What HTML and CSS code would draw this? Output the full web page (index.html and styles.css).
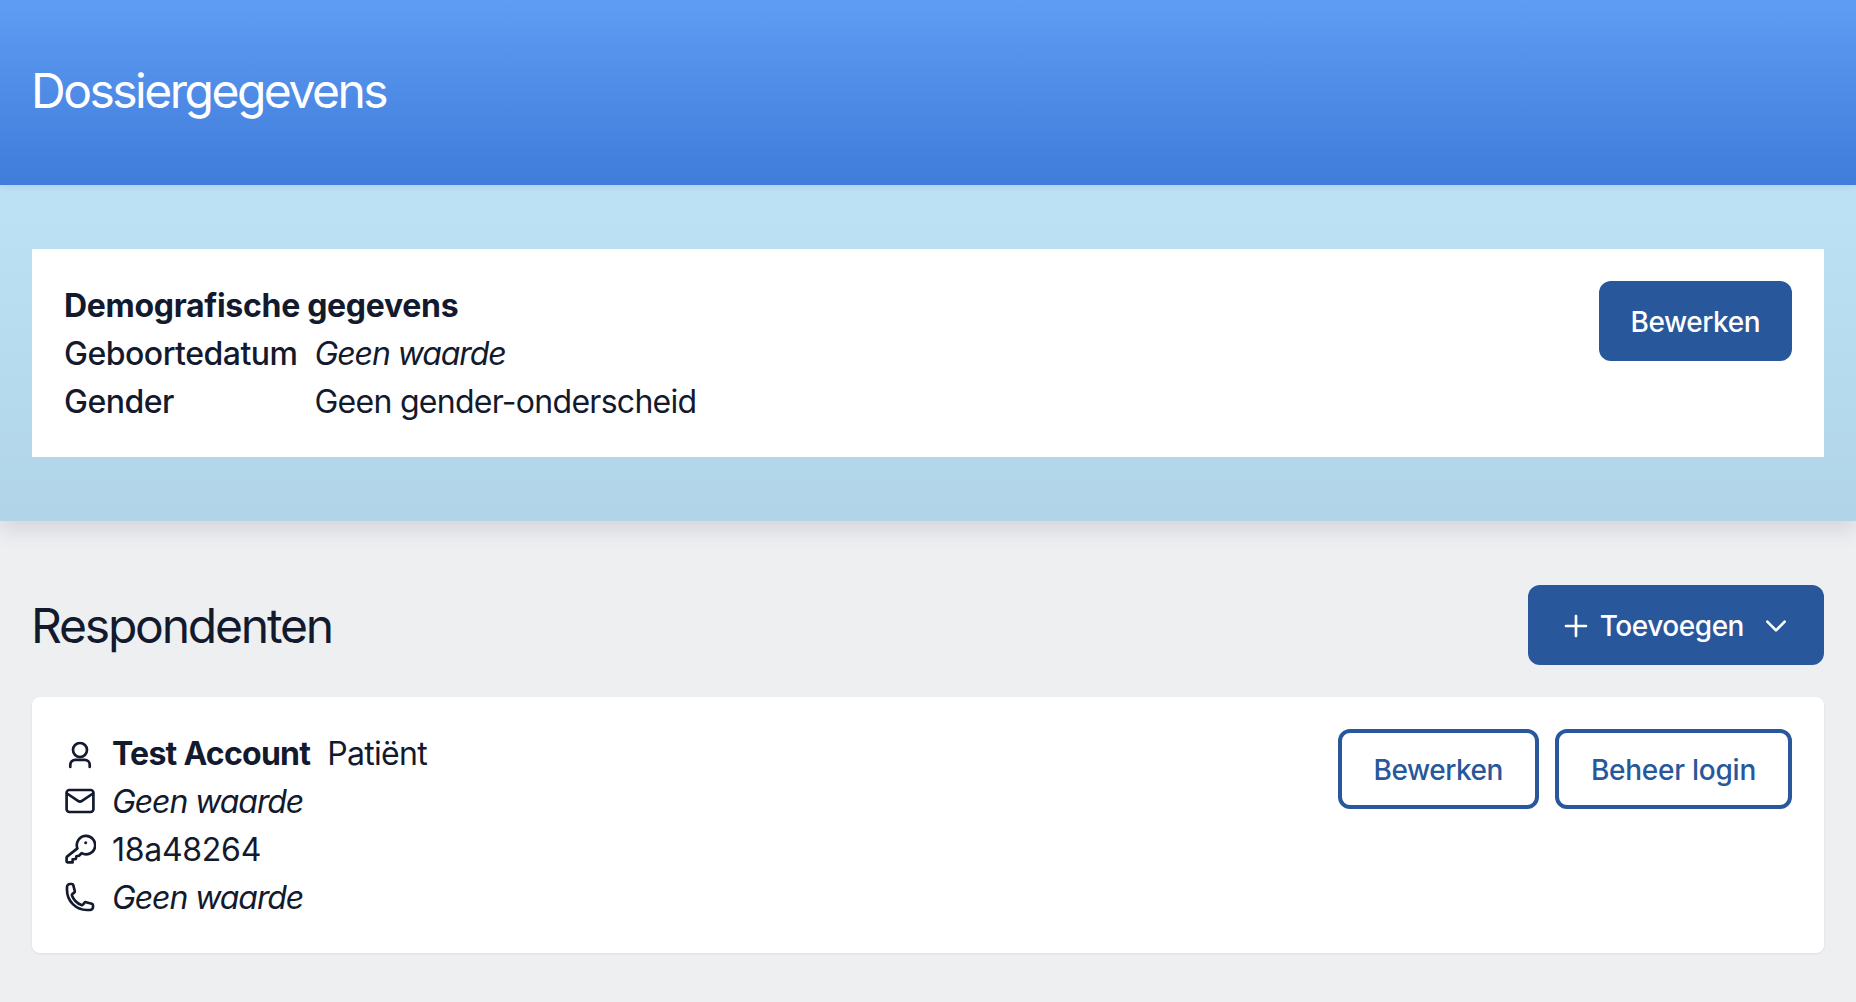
FILE: index.html
```html
<!DOCTYPE html>
<html lang="nl">
<head>
<meta charset="utf-8">
<title>Dossiergegevens</title>
<link rel="stylesheet" href="styles.css">
</head>
<body>
<header class="page-header">
  <h1 class="page-title">Dossiergegevens</h1>
</header>
<section class="band">
  <div class="demo-card">
    <div class="demo-info">
      <h2 class="demo-title">Demografische gegevens</h2>
      <dl class="demo-grid">
        <dt class="demo-label">Geboortedatum</dt>
        <dd class="demo-value empty">Geen waarde</dd>
        <dt class="demo-label">Gender</dt>
        <dd class="demo-value">Geen gender-onderscheid</dd>
      </dl>
    </div>
    <button class="btn btn-solid" type="button">Bewerken</button>
  </div>
</section>
<main class="content">
  <div class="section-head">
    <h2 class="section-title">Respondenten</h2>
    <button class="btn btn-solid btn-menu" type="button">
      <svg class="icon plus" viewBox="0 0 24 24"><path d="M12 4.5v15m7.5-7.5h-15"/></svg>
      <span class="btn-text">Toevoegen</span>
      <svg class="icon chevron" viewBox="0 0 24 24"><path d="M18.5 8.75l-6.5 6.5-6.5-6.5"/></svg>
    </button>
  </div>
  <article class="resp-card">
    <div class="resp-rows">
      <div class="resp-row">
        <svg class="icon row-icon" viewBox="0 0 32 32"><circle cx="16" cy="13" r="7"/><path d="M6.3 30v-2.2a5 5 0 0 1 5-5h9.4a5 5 0 0 1 5 5V30"/></svg>
        <span class="resp-name">Test Account</span>
        <span>Patiënt</span>
      </div>
      <div class="resp-row">
        <svg class="icon row-icon" viewBox="0 0 32 32"><rect x="2.6" y="5" width="26.8" height="22" rx="2.8"/><path d="M3 8.5l11 7.4a3.6 3.6 0 0 0 4 0l11-7.4"/></svg>
        <span class="empty">Geen waarde</span>
      </div>
      <div class="resp-row">
        <svg class="icon row-icon" viewBox="0 0 32 32"><path d="M13.4 15.4A9.2 9.2 0 1 1 17.6 20.2L15 22.8L12.4 23.2L11.8 26L8.6 26.4V29.4H3.8A1.2 1.2 0 0 1 2.6 28.2V24.6a1.4 1.4 0 0 1 .4-1Z"/><circle class="dot" cx="21.7" cy="9.7" r="1.5"/></svg>
        <span class="code">18a48264</span>
      </div>
      <div class="resp-row">
        <svg class="icon row-icon" viewBox="0 0 24 24"><path d="M2.25 6.75c0 8.284 6.716 15 15 15h2.25a2.25 2.25 0 002.25-2.25v-1.372c0-.516-.351-.966-.852-1.091l-4.423-1.106c-.44-.11-.902.055-1.173.417l-.97 1.293c-.282.376-.769.542-1.21.38a12.035 12.035 0 01-7.143-7.143c-.162-.441.004-.928.38-1.21l1.293-.97c.363-.271.527-.734.417-1.173L6.963 3.102a1.125 1.125 0 00-1.091-.852H4.5A2.25 2.25 0 002.25 4.5v2.25z"/></svg>
        <span class="empty">Geen waarde</span>
      </div>
    </div>
    <div class="resp-actions">
      <button class="btn btn-outline" type="button">Bewerken</button>
      <button class="btn btn-outline btn-wide" type="button">Beheer login</button>
    </div>
  </article>
</main>
</body>
</html>
```
FILE: styles.css
```css
* { box-sizing: border-box; }
html, body { height: 100%; }
body {
  margin: 0;
  background: #eeeff1;
  color: #131a2e;
  font-family: Inter, "Liberation Sans", sans-serif;
  font-size: 32px;
  font-weight: 400;
  line-height: 48px;
  letter-spacing: -0.72px;
  overflow: hidden;
}
h1, h2, dl, dd { margin: 0; }
.page-header {
  position: relative;
  z-index: 2;
  height: 185px;
  padding: 59px 32px;
  background: linear-gradient(#5f9cf3, #3f7cdb);
  box-shadow: 0 1px 8px rgba(20, 50, 90, 0.12);
}
.page-title {
  margin-left: -1px;
  color: #fff;
  font-size: 48px;
  line-height: 64px;
  font-weight: 400;
  letter-spacing: -2.5px;
}
.band {
  position: relative;
  z-index: 1;
  padding: 64px 32px;
  background: linear-gradient(#bde2f5, #b1d4e8);
  box-shadow: 0 8px 20px rgba(40, 50, 90, 0.14);
}
.demo-card {
  display: flex;
  justify-content: space-between;
  align-items: flex-start;
  height: 208px;
  padding: 32px;
  background: #fff;
}
.demo-info { padding-top: 1px; }
.demo-title {
  font-size: 32px;
  line-height: 48px;
  font-weight: 700;
  letter-spacing: -0.3px;
}
.demo-grid {
  display: grid;
  grid-template-columns: max-content max-content;
  grid-auto-rows: 48px;
  column-gap: 17px;
}
.demo-label { font-weight: 500; letter-spacing: -0.5px; }
.empty { font-style: italic; letter-spacing: -1.08px; }
.code { letter-spacing: -0.28px; }
.btn {
  display: inline-flex;
  align-items: center;
  height: 80px;
  padding: 2px 32px 0;
  border: 0;
  border-radius: 12px;
  font: 500 28px/48px Inter, "Liberation Sans", sans-serif;
  letter-spacing: -0.47px;
}
.btn-solid { background: #28579b; color: #fff; }
.btn-outline { background: #fff; color: #28579b; border: 4px solid #28579b; padding: 2px 32px 0; }
.btn-wide { letter-spacing: -0.25px; }
.btn-menu { gap: 8px; }
.btn-menu .chevron { margin-left: 8px; }
.content { padding: 64px 32px; }
.section-head {
  display: flex;
  justify-content: space-between;
  align-items: center;
  margin-bottom: 32px;
}
.section-title {
  margin-left: -1px;
  padding-top: 2px;
  font-size: 48px;
  line-height: 64px;
  font-weight: 400;
  letter-spacing: -2.2px;
}
.icon {
  width: 32px;
  height: 32px;
  flex: none;
  fill: none;
  stroke: currentColor;
  stroke-linecap: round;
  stroke-linejoin: round;
  stroke-width: 2;
}
.row-icon[viewBox="0 0 32 32"] { stroke-width: 2.67; }
.dot { fill: currentColor; stroke: none; }
.resp-card {
  display: flex;
  justify-content: space-between;
  align-items: flex-start;
  padding: 32px;
  background: #fff;
  border-radius: 8px;
  box-shadow: 0 1px 3px rgba(20, 30, 60, 0.08);
}
.resp-row { display: flex; align-items: center; height: 48px; padding-top: 2px; }
.row-icon { margin-right: 16px; margin-top: -2px; }
.resp-name { font-weight: 700; margin-right: 17px; letter-spacing: -0.74px; }
.resp-actions { display: flex; gap: 16px; }
```
